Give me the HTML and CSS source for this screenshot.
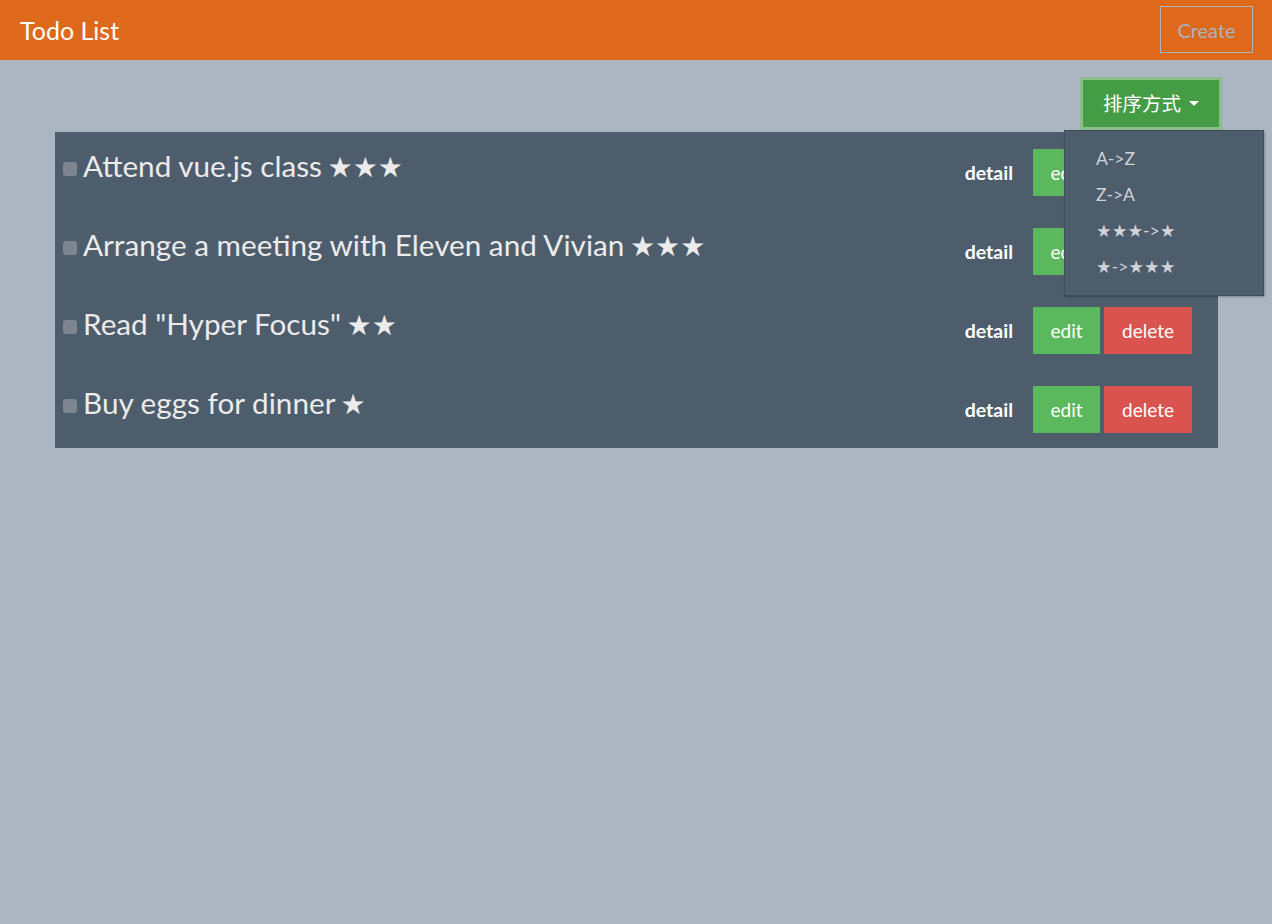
FILE: index.html
```html
<!DOCTYPE html>
<html>
<head>
<meta charset="utf-8">
<link rel="stylesheet" href="styles.css">
</head>
<body>
<header class="navbar">
  <div class="brand">Todo List</div>
  <button class="create">Create</button>
</header>
<main class="content">
  <div class="sort-bar">
    <div class="dropdown">
      <button class="sort-btn">排序方式 <span class="caret"></span></button>
      <ul class="menu">
        <li>A-&gt;Z</li>
        <li>Z-&gt;A</li>
        <li>★★★-&gt;★</li>
        <li>★-&gt;★★★</li>
      </ul>
    </div>
  </div>
  <ul class="todos">
    <li class="todo">
      <span class="check"></span>
      <span class="title">Attend vue.js class <span class="stars">★★★</span></span>
      <div class="actions"><span class="detail">detail</span><span class="btn edit">edit</span><span class="btn del">delete</span></div>
    </li>
    <li class="todo">
      <span class="check"></span>
      <span class="title">Arrange a meeting with Eleven and Vivian <span class="stars">★★★</span></span>
      <div class="actions"><span class="detail">detail</span><span class="btn edit">edit</span><span class="btn del">delete</span></div>
    </li>
    <li class="todo">
      <span class="check"></span>
      <span class="title">Read "Hyper Focus" <span class="stars">★★</span></span>
      <div class="actions"><span class="detail">detail</span><span class="btn edit">edit</span><span class="btn del">delete</span></div>
    </li>
    <li class="todo">
      <span class="check"></span>
      <span class="title">Buy eggs for dinner <span class="stars">★</span></span>
      <div class="actions"><span class="detail">detail</span><span class="btn edit">edit</span><span class="btn del">delete</span></div>
    </li>
  </ul>
</main>
</body>
</html>
```

FILE: styles.css
```css
* { box-sizing: border-box; }
html, body { margin: 0; padding: 0; }
body {
  background: #abb6c2;
  font-family: Lato, "DejaVu Sans", "Noto Sans CJK SC", sans-serif;
  color: #ebebeb;
  min-height: 924px;
}
.navbar {
  height: 60px;
  background: #df691a;
  display: flex;
  align-items: center;
  justify-content: space-between;
  padding: 0 19px 0 20px;
}
.brand {
  color: #fff;
  font-size: 25px;
}
.create {
  height: 47px;
  width: 93px;
  background: transparent;
  border: 1px solid #abb6c2;
  color: #a9b3be;
  font-family: Lato, sans-serif;
  font-size: 20px;
  padding: 0;
  margin-top: -1px;
}
.content {
  padding: 17px 54px 0 55px;
}
.sort-bar {
  display: flex;
  justify-content: flex-end;
  height: 55px;
}
.dropdown {
  position: relative;
  margin-right: -4px;
}
.sort-btn {
  height: 53px;
  width: 142px;
  background: #449d44;
  border: 3px solid #8dbd8d;
  color: #fff;
  font-family: "Noto Sans CJK SC", sans-serif;
  font-size: 19.5px;
  padding: 0 0 2px 0;
  display: flex;
  align-items: center;
  justify-content: center;
  gap: 8px;
}
.caret {
  display: inline-block;
  width: 0;
  height: 0;
  border-left: 5px solid transparent;
  border-right: 5px solid transparent;
  border-top: 5px solid #fff;
  margin-top: 1px;
}
.menu {
  position: absolute;
  top: 53px;
  right: -42px;
  width: 200px;
  margin: 0;
  padding: 10px 0 10px 0;
  list-style: none;
  background: #4e5d6c;
  border: 1px solid #3f4c58;
  box-shadow: 1px 1px 2px rgba(0,0,0,0.25);
  z-index: 5;
}
.menu li {
  height: 36px;
  line-height: 36px;
  padding-left: 31px;
  font-size: 17.5px;
  color: #cfd3d8;
}
.todos {
  list-style: none;
  margin: 0;
  padding: 0;
  background: #4e5d6c;
}
.todo {
  height: 79px;
  display: flex;
  align-items: center;
  padding: 0 26px 0 8px;
}
.check {
  width: 14px;
  height: 14px;
  background: #7d8690;
  border-radius: 3px;
  margin-right: 6px;
  margin-top: -6px;
  flex: none;
}
.title {
  font-size: 29.7px;
  color: #ebebeb;
  flex: 1;
  margin-top: -11px;
}
.stars {
  font-family: "DejaVu Sans", sans-serif;
  font-size: 28px;
  margin-left: -2px;
}
.actions {
  display: flex;
  align-items: center;
  margin-top: 2px;
}
.detail {
  font-size: 19.5px;
  font-weight: bold;
  color: #fff;
  margin-right: 20px;
}
.btn {
  height: 47px;
  line-height: 47px;
  text-align: center;
  font-size: 19px;
  color: #fff;
}
.edit {
  background: #5cb85c;
  width: 67px;
  margin-right: 4px;
}
.del {
  background: #d9534f;
  width: 88px;
}
```
